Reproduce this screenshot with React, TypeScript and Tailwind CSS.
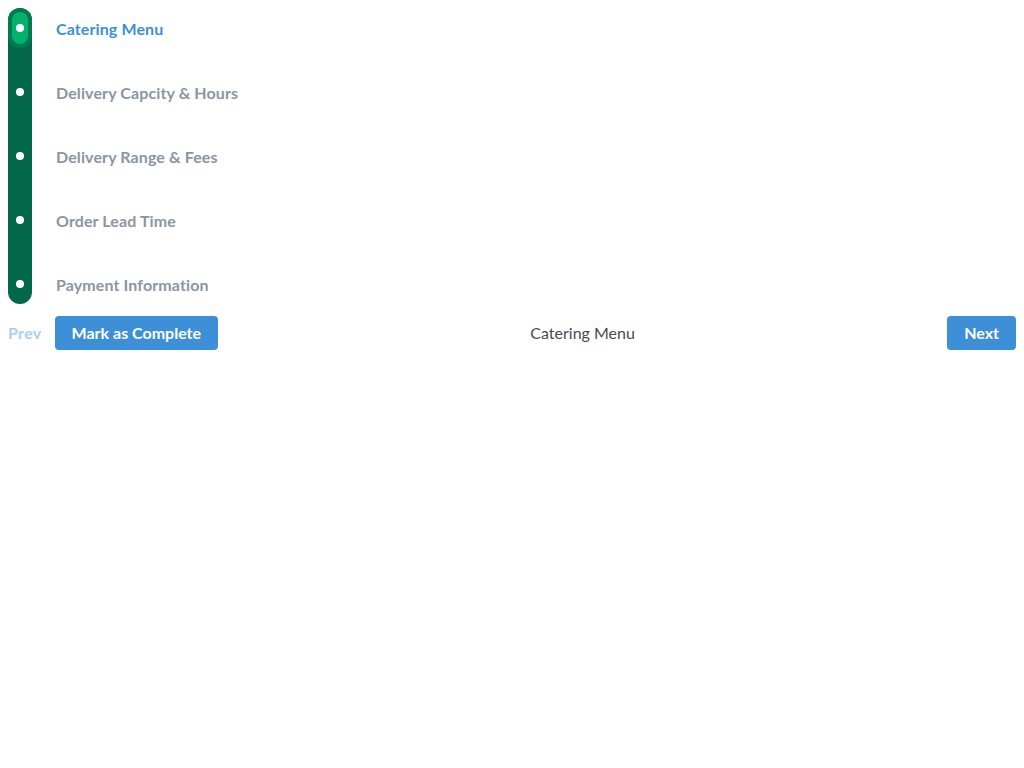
import React from "react";

const steps = [
  "Catering Menu",
  "Delivery Capcity & Hours",
  "Delivery Range & Fees",
  "Order Lead Time",
  "Payment Information",
];

export default function App() {
  const active = 0;

  return (
    <div className="min-h-screen bg-white p-2 font-['Lato',sans-serif]">
      <div className="flex">
        <div className="w-6 rounded-full bg-[#03684a] p-1 flex flex-col gap-8">
          {steps.map((s, i) => (
            <div
              key={s}
              className={
                i === active
                  ? "h-8 rounded-full bg-[#00b26c] ring-4 ring-[#037a52] flex items-center justify-center"
                  : "h-8 flex items-center justify-center"
              }
            >
              <span className="w-2 h-2 rounded-full bg-white" />
            </div>
          ))}
        </div>
        <div className="ml-6 pt-[5px] flex flex-col gap-8">
          {steps.map((s, i) => (
            <div
              key={s}
              className={
                "h-8 flex items-center text-base font-bold tracking-[0.007em] " +
                (i === active ? "text-[#3d8fd8]" : "text-[#8a96a3]")
              }
            >
              {s}
            </div>
          ))}
        </div>
      </div>

      <div className="mt-3 flex items-center">
        <span className="text-base font-bold tracking-[0.02em] text-[#acd0f0]">Prev</span>
        <button className="ml-[13px] h-[34px] px-[17px] rounded bg-[#3d8fd8] text-white text-base font-bold">
          Mark as Complete
        </button>
        <div className="flex-1 text-center text-base text-[#4a4a4a]">Catering Menu</div>
        <button className="h-[34px] px-[17px] rounded bg-[#3d8fd8] text-white text-base font-bold">
          Next
        </button>
      </div>
    </div>
  );
}
